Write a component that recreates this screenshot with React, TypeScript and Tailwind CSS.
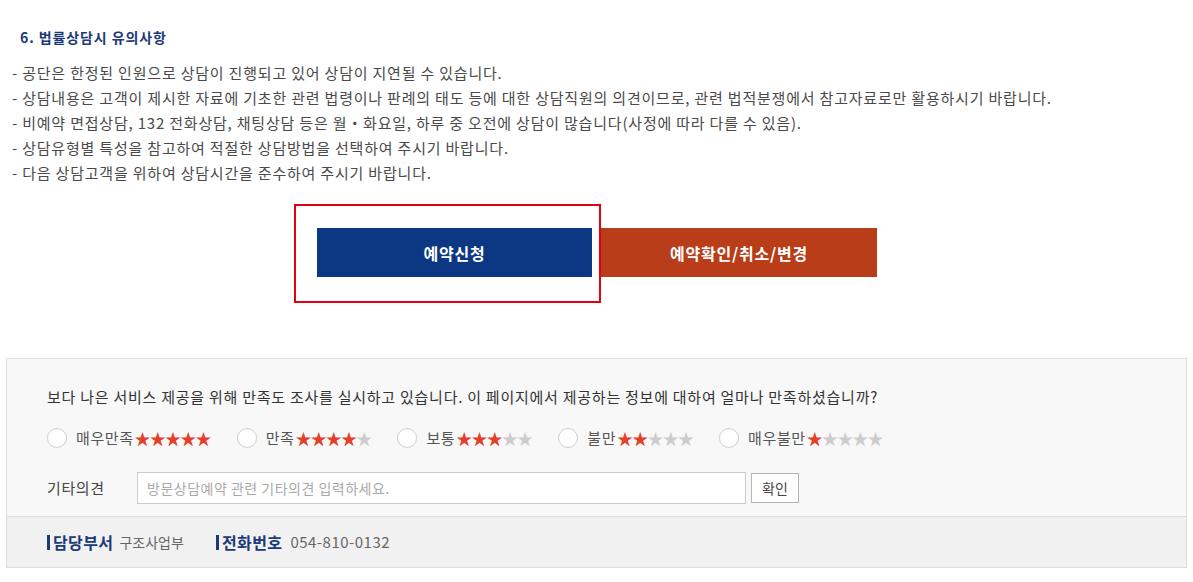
const FONT = "font-['Noto_Sans_CJK_KR','Noto_Sans',sans-serif]";

const notes = [
  '- 공단은 한정된 인원으로 상담이 진행되고 있어 상담이 지연될 수 있습니다.',
  '- 상담내용은 고객이 제시한 자료에 기초한 관련 법령이나 판례의 태도 등에 대한 상담직원의 의견이므로, 관련 법적분쟁에서 참고자료로만 활용하시기 바랍니다.',
  '- 비예약 면접상담, 132 전화상담, 채팅상담 등은 월・화요일, 하루 중 오전에 상담이 많습니다(사정에 따라 다를 수 있음).',
  '- 상담유형별 특성을 참고하여 적절한 상담방법을 선택하여 주시기 바랍니다.',
  '- 다음 상담고객을 위하여 상담시간을 준수하여 주시기 바랍니다.',
];

const ratings = [
  { label: '매우만족', score: 5 },
  { label: '만족', score: 4 },
  { label: '보통', score: 3 },
  { label: '불만', score: 2 },
  { label: '매우불만', score: 1 },
];

function Stars({ score }: { score: number }) {
  return (
    <span className="ml-[1px] text-[16px] leading-none tracking-[-0.8px]">
      {[1, 2, 3, 4, 5].map((i) => (
        <span key={i} className={i <= score ? 'text-[#e3402a]' : 'text-[#cccccc]'}>
          ★
        </span>
      ))}
    </span>
  );
}

export default function App() {
  return (
    <div className={`${FONT} w-[1193px] h-[582px] bg-white text-[#444]`}>
      {/* 유의사항 */}
      <div className="pt-[27px] pl-[12px]">
        <h3 className="pl-[8px] text-[14px] leading-[20px] font-bold tracking-[0.9px] text-[#1b3a78]">6. 법률상담시 유의사항</h3>
        <ul className="mt-[13px] text-[15px] leading-[25px] text-[#4a4a4a] tracking-[0.8px]">
          {notes.map((n) => (
            <li key={n}>{n}</li>
          ))}
        </ul>
      </div>

      {/* 버튼 */}
      <div className="mt-[43px] flex justify-center gap-[9px] pl-[1px]">
        <div className="relative">
          <div className="absolute left-[-23px] top-[-24px] w-[307px] h-[99px] border-[2px] border-[#e3000f]" />
          <button className="w-[275px] h-[49px] bg-[#0c3783] text-white text-[16px] font-bold tracking-[0.8px]">예약신청</button>
        </div>
        <button className="w-[276px] h-[49px] bg-[#b83d18] text-white text-[16px] font-bold tracking-[0.8px]">예약확인/취소/변경</button>
      </div>

      {/* 만족도 조사 */}
      <div className="mt-[81px] ml-[6px] w-[1181px] border border-[#dddddd] bg-[#f8f8f8]">
        <div className="pl-[40px] pt-[28px] pb-[12px]">
          <p className="text-[15px] leading-[20px] text-[#333] tracking-[0.75px]">
            보다 나은 서비스 제공을 위해 만족도 조사를 실시하고 있습니다. 이 페이지에서 제공하는 정보에 대하여 얼마나 만족하셨습니까?
          </p>
          <div className="mt-[21px] flex items-center gap-[26px]">
            {ratings.map((r) => (
              <label key={r.label} className="flex items-center">
                <span className="w-[20px] h-[20px] rounded-full border border-[#cfcfcf] bg-white" />
                <span className="ml-[9px] text-[15px] leading-[20px] text-[#555] tracking-[0.6px]">{r.label}</span>
                <Stars score={r.score} />
              </label>
            ))}
          </div>
          <div className="mt-[24px] flex items-center">
            <span className="w-[90px] text-[15px] text-[#444] tracking-[0.6px]">기타의견</span>
            <input
              className="w-[609px] h-[32px] border border-[#cccccc] bg-white px-[9px] text-[14px] tracking-[0.5px] placeholder:text-[#aaaaaa] outline-none"
              placeholder="방문상담예약 관련 기타의견 입력하세요."
            />
            <button className="ml-[5px] w-[48px] h-[30px] border border-[#b5b5b5] bg-white text-[14px] text-[#444]">확인</button>
          </div>
        </div>
        <div className="h-[51px] border-t border-[#dddddd] bg-[#f2f1f1] pl-[40px] flex items-center text-[15px]">
          <span className="flex items-center">
            <span className="w-[3px] h-[15px] bg-[#1b3a78] mr-[3px]" />
            <b className="text-[16px] text-[#1b3a78] tracking-[0.4px]">담당부서</b>
            <span className="ml-[6px] text-[14px] text-[#666]">구조사업부</span>
          </span>
          <span className="ml-[32px] flex items-center">
            <span className="w-[3px] h-[15px] bg-[#1b3a78] mr-[3px]" />
            <b className="text-[16px] text-[#1b3a78] tracking-[0.4px]">전화번호</b>
            <span className="ml-[8px] text-[#666] tracking-[0.5px]">054-810-0132</span>
          </span>
        </div>
      </div>
    </div>
  );
}
